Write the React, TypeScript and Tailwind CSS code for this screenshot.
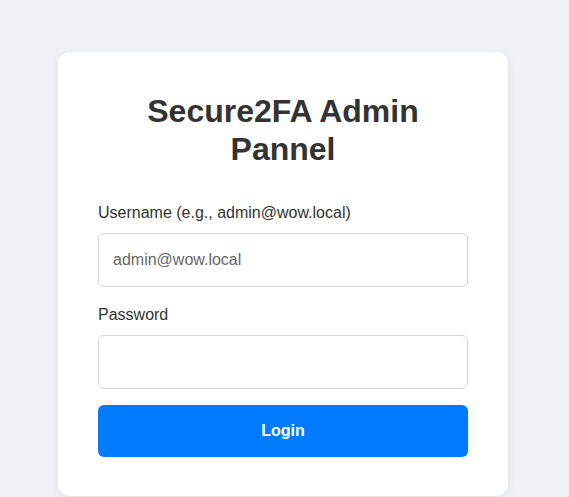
import { useState } from 'react';

export default function App() {
  const [username, setUsername] = useState('');
  const [password, setPassword] = useState('');

  return (
    <div
      className="min-h-screen bg-[#f0f2f5] flex justify-center pt-[52px] pr-[3px]"
      style={{ fontFamily: '"Liberation Sans", Arial, sans-serif' }}
    >
      <div className="w-[450px] h-[444px] bg-white rounded-xl shadow-[0_2px_10px_rgba(0,0,0,0.08)] px-10 pt-10 pb-10">
        <h1 className="text-[32px] leading-[38px] font-bold text-[#333] text-center">
          Secure2FA Admin
          <br />
          Pannel
        </h1>

        <form className="mt-[36px]" onSubmit={(e) => e.preventDefault()}>
          <label className="block text-base leading-[18px] text-[#333] mb-[11px]">
            Username (e.g., admin@wow.local)
          </label>
          <input
            type="text"
            value={username}
            onChange={(e) => setUsername(e.target.value)}
            placeholder="admin@wow.local"
            className="w-full h-[54px] px-[14px] text-base text-[#333] placeholder:text-[#666] border border-[#d6d6d6] rounded-md outline-none"
          />

          <label className="block text-base leading-[18px] text-[#333] mt-[19px] mb-[11px]">
            Password
          </label>
          <input
            type="password"
            value={password}
            onChange={(e) => setPassword(e.target.value)}
            className="w-full h-[54px] px-[14px] text-base text-[#333] border border-[#d6d6d6] rounded-md outline-none"
          />

          <button
            type="submit"
            className="w-full h-[52px] mt-[16px] bg-[#007bff] text-white text-base font-bold rounded-md"
          >
            Login
          </button>
        </form>
      </div>
    </div>
  );
}
